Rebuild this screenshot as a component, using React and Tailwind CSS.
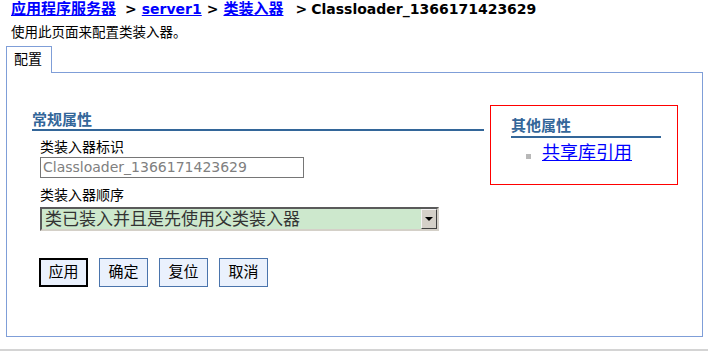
import React from 'react';

const FONT = { fontFamily: '"DejaVu Sans", "Noto Sans CJK SC", sans-serif' };

const Sep = ({ className = '' }) => (
    <span className={`inline-block text-[14px] text-black ${className}`}>&gt;</span>
);

const Breadcrumb = () => (
    <div className="pl-[11px] h-[20px] leading-[18px] font-bold whitespace-nowrap">
        <a href="#" className="text-[15px] text-[#0000ff] underline">应用程序服务器</a>
        <Sep className="ml-[9px] mr-[5px]" />
        <a href="#" className="text-[14px] text-[#0000ff] underline">server1</a>
        <Sep className="ml-[5px] mr-[5px]" />
        <a href="#" className="text-[15px] text-[#0000ff] underline">类装入器</a>
        <Sep className="ml-[12px] mr-[4px]" />
        <span className="text-[14px] text-black">Classloader_1366171423629</span>
    </div>
);

const Button = ({ label, primary = false }) => (
    <button
        className={`w-[49px] h-[29px] bg-[#eaf1fd] text-[15px] text-black leading-none ${
            primary ? 'border-2 border-black' : 'border border-[#4a74ac]'
        }`}
    >
        {label}
    </button>
);

const SelectBox = () => (
    <div className="flex w-[399px] h-[24px] border-2 border-t-[#5a5a5a] border-l-[#5a5a5a] border-r-[#d4d0c8] border-b-[#d4d0c8] bg-[#cde8cd]">
        <div className="flex-1 pl-[3px] text-[17px] leading-[20px] text-[#333]">类已装入并且是先使用父类装入器</div>
        <div className="w-[16px] h-full flex items-center justify-center bg-[#d4d0c8] border border-t-[#f4f4f4] border-l-[#f4f4f4] border-r-[#404040] border-b-[#404040]">
            <div className="w-0 h-0 border-l-[4px] border-r-[4px] border-t-[4px] border-l-transparent border-r-transparent border-t-black" />
        </div>
    </div>
);

const GeneralProps = () => (
    <div className="w-[452px] mt-[6px]">
        <div className="text-[15px] font-bold text-[#336699] leading-[18px] border-b-2 border-[#336699]">常规属性</div>
        <div className="pl-[8px]">
            <div className="mt-[7px] text-[14px] leading-[19px] text-black">类装入器标识</div>
            <div className="w-[264px] h-[21px] border border-[#767676] pl-[2px] text-[14px] leading-[19px] text-[#808080]">
                Classloader_1366171423629
            </div>
            <div className="mt-[7px] text-[14px] leading-[20px] text-black">类装入器顺序</div>
            <div className="mt-[2px]">
                <SelectBox />
            </div>
            <div className="flex gap-[11px] mt-[27px] -ml-px">
                <Button label="应用" primary />
                <Button label="确定" />
                <Button label="复位" />
                <Button label="取消" />
            </div>
        </div>
    </div>
);

const OtherProps = () => (
    <div className="ml-[6px] w-[188px] h-[80px] border border-[#ff0000] pt-[11px] pl-[20px]">
        <div className="w-[150px] text-[15px] font-bold text-[#336699] leading-[18px] pb-px border-b-2 border-[#336699]">其他属性</div>
        <div className="flex items-start mt-[4px] pl-[15px]">
            <span className="w-[5px] h-[5px] mt-[12px] bg-[#b8b8b8]" />
            <a href="#" className="ml-[11px] text-[18px] leading-[22px] text-[#0000ff] underline">共享库引用</a>
        </div>
    </div>
);

export default function App() {
    return (
        <div className="w-[708px] h-[351px] bg-white overflow-hidden" style={FONT}>
            <Breadcrumb />
            <div className="pl-[11px] h-[26px] pt-[2px] text-[13.5px] leading-[20px] text-black">使用此页面来配置类装入器。</div>

            <div className="ml-[6px] w-[697px]">
                <div className="relative z-10 -mb-px w-[46px] h-[27px] pl-[7px] border border-b-0 border-[#7f9ed8] bg-white text-[14px] leading-[25px] text-black">
                    配置
                </div>
                <div className="h-[265px] border border-[#7f9ed8] pt-[32px] pl-[25px]">
                    <div className="flex items-start">
                        <GeneralProps />
                        <OtherProps />
                    </div>
                </div>
            </div>

            <div className="mt-[12px] h-[2px] bg-[#d4d4d4]" />
        </div>
    );
}
